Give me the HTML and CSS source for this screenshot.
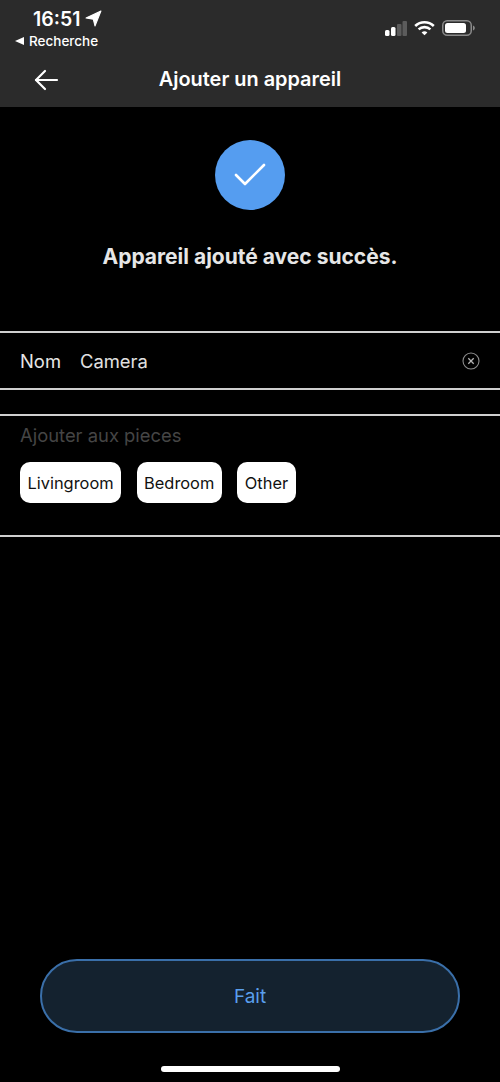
FILE: index.html
```html
<!DOCTYPE html>
<html lang="fr">
<head>
  <meta charset="UTF-8" />
  <title>Ajouter un appareil</title>
  <link rel="stylesheet" href="styles.css">
</head>
<body>
  <div class="page">
    <header class="top">
      <div class="status-bar">
        <div class="status-left">
          <div class="time-row">
            <span class="time">16:51</span>
            <svg class="location" width="17" height="17" viewBox="0 0 16 16"><path d="M1 7.6 15 1 9.4 15 7.8 8.6Z" fill="#fff" stroke="#fff" stroke-width="1" stroke-linejoin="round"/></svg>
          </div>
          <div class="back-app"><span class="back-tri"></span>Recherche</div>
        </div>
        <div class="status-right">
          <svg width="22" height="16" viewBox="0 0 22 16">
            <rect x="0" y="10" width="4.5" height="6" rx="1.5" fill="#fff"/>
            <rect x="6" y="7" width="4.5" height="9" rx="1.5" fill="#fff"/>
            <rect x="12" y="4" width="4.5" height="12" rx="1" fill="#5c5c5c"/>
            <rect x="17.5" y="1" width="4.5" height="15" rx="1" fill="#5c5c5c"/>
          </svg>
          <svg width="21" height="16" viewBox="0 0 21 16" fill="none" stroke="#fff" stroke-width="2.6">
            <path d="M1.2 6C6.5 1 14.5 1 19.8 6"/>
            <path d="M4.6 9.4C7.9 6.4 13.1 6.4 16.4 9.4"/>
            <path d="M10.5 15.2 7.6 12.4C9.3 11 11.7 11 13.4 12.4Z" fill="#fff" stroke="none"/>
          </svg>
          <svg width="33" height="16" viewBox="0 0 33 16">
            <rect x="0.75" y="0.75" width="28.5" height="14.5" rx="4.5" fill="none" stroke="#8a8a8a" stroke-width="1.5"/>
            <rect x="3" y="3" width="21" height="10" rx="2.5" fill="#fff"/>
            <path d="M31 5.5c1.2.4 1.8 1.3 1.8 2.5s-.6 2.1-1.8 2.5Z" fill="#8a8a8a"/>
          </svg>
        </div>
      </div>
      <div class="nav-bar">
        <svg class="back-arrow" width="26" height="24" viewBox="0 0 26 24" fill="none" stroke="#fff" stroke-width="2.2" stroke-linecap="round" stroke-linejoin="round">
          <path d="M24 12H3"/>
          <path d="M12 3 3 12l9 9"/>
        </svg>
        <h1 class="nav-title">Ajouter un appareil</h1>
      </div>
    </header>

    <main class="content">
      <div class="success">
        <div class="check-circle">
          <svg width="32" height="24" viewBox="0 0 32 24" fill="none" stroke="#fff" stroke-width="2.6" stroke-linecap="round" stroke-linejoin="round">
            <path d="M2 12 11 21 30 2"/>
          </svg>
        </div>
        <p class="success-text">Appareil ajouté avec succès.</p>
      </div>

      <div class="name-row">
        <span class="name-label">Nom</span>
        <span class="name-value">Camera</span>
        <svg class="clear" width="18" height="18" viewBox="0 0 18 18" fill="none" stroke="#8c8c8c">
          <circle cx="9" cy="9" r="8" stroke-width="1.1"/>
          <path d="M6.3 6.3l5.4 5.4M11.7 6.3l-5.4 5.4" stroke="#b5b5b5" stroke-width="1.3"/>
        </svg>
      </div>

      <div class="rooms">
        <div class="rooms-label">Ajouter aux pieces</div>
        <div class="room-list">
          <button class="room">Livingroom</button>
          <button class="room">Bedroom</button>
          <button class="room">Other</button>
        </div>
      </div>
    </main>

    <footer class="bottom">
      <button class="done">Fait</button>
      <div class="home-bar"></div>
    </footer>
  </div>
</body>
</html>
```

FILE: styles.css
```css
* {
  box-sizing: border-box;
}
body {
  margin: 0;
  background-color: #000;
  color: #fff;
  font-family: Inter, "Liberation Sans", sans-serif;
}
.page {
  display: flex;
  flex-direction: column;
  height: 1082px;
  overflow: hidden;
}
.top {
  height: 107px;
  background-color: #2b2b2b;
}
.status-bar {
  display: flex;
  justify-content: space-between;
  height: 51px;
  padding: 8px 25px 0 15px;
}
.time-row {
  display: flex;
  align-items: center;
  gap: 5px;
  height: 22px;
  padding-left: 18px;
}
.time {
  font-size: 19.5px;
  font-weight: 600;
}
.location {
  margin-top: -1px;
}
.back-app {
  display: flex;
  align-items: center;
  gap: 5px;
  margin-top: 3px;
  font-size: 13.5px;
  font-weight: 500;
}
.back-tri {
  width: 0;
  height: 0;
  border-top: 4px solid transparent;
  border-bottom: 4px solid transparent;
  border-right: 9px solid #fff;
}
.status-right {
  display: flex;
  align-items: flex-start;
  gap: 7px;
  padding: 12px 0 0 0;
}
.nav-bar {
  position: relative;
  display: flex;
  align-items: center;
  justify-content: center;
  height: 56px;
}
.back-arrow {
  position: absolute;
  left: 33px;
  top: 17px;
}
.nav-title {
  margin: 0;
  font-size: 19.9px;
  font-weight: 600;
}
.content {
  flex: 1;
}
.success {
  display: flex;
  flex-direction: column;
  align-items: center;
  height: 224px;
  padding-top: 33px;
}
.check-circle {
  display: flex;
  align-items: center;
  justify-content: center;
  width: 70px;
  height: 70px;
  border-radius: 50%;
  background-color: #559df0;
}
.success-text {
  margin: 34px 0 0;
  color: #e6e6e6;
  font-size: 21px;
  font-weight: 700;
  line-height: 26px;
}
.name-row {
  display: flex;
  align-items: center;
  height: 59px;
  padding: 0 20px;
  border-top: 2px solid #cfcfcf;
  border-bottom: 2px solid #cfcfcf;
}
.name-label {
  width: 60px;
  color: #e6e6e6;
  font-size: 18.4px;
}
.name-value {
  flex: 1;
  color: #e0e0e0;
  font-size: 18.4px;
}
.rooms {
  height: 123px;
  margin-top: 24px;
  padding: 8px 20px 0;
  border-top: 2px solid #cfcfcf;
  border-bottom: 2px solid #cfcfcf;
}
.rooms-label {
  color: #454545;
  font-size: 18.4px;
  line-height: 22px;
}
.room-list {
  display: flex;
  gap: 15.5px;
  margin-top: 16px;
}
.room {
  height: 41px;
  padding: 0 7.5px;
  border: none;
  border-radius: 10px;
  background-color: #fff;
  color: #111;
  font-family: inherit;
  font-size: 16.4px;
}
.bottom {
  display: flex;
  flex-direction: column;
  align-items: center;
  padding-bottom: 10px;
}
.done {
  width: 420px;
  height: 74px;
  padding-top: 2px;
  border: 2px solid #3a6fa9;
  border-radius: 37px;
  background-color: #14222f;
  color: #5a9fec;
  font-family: inherit;
  font-size: 19px;
}
.home-bar {
  width: 179px;
  height: 6px;
  margin-top: 33px;
  border-radius: 3px;
  background-color: #fff;
}
```
